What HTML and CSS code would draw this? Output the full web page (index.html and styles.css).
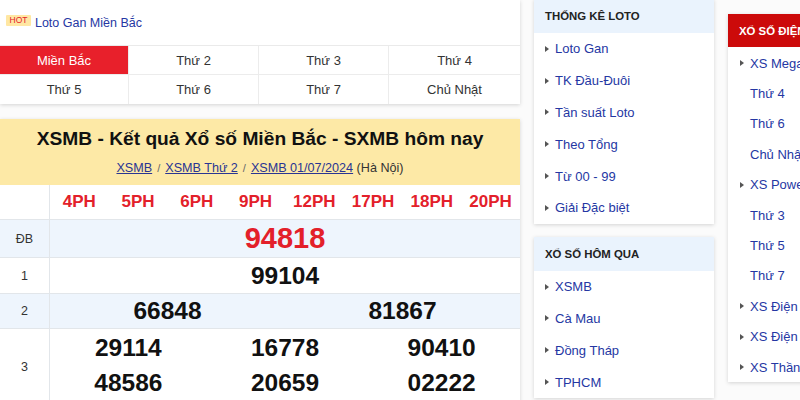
FILE: index.html
```html
<!DOCTYPE html>
<html lang="vi">
<head>
<meta charset="utf-8">
<title>XSMB - Kết quả Xổ số Miền Bắc</title>
<link rel="stylesheet" href="styles.css">
</head>
<body>
<div class="page">
  <div class="col-main">
    <section class="card card-top">
      <div class="hot-row"><span class="hot">HOT</span><a href="#" class="hot-link">Loto Gan Miền Bắc</a></div>
      <div class="tabs">
        <a href="#" class="tab active">Miền Bắc</a>
        <a href="#" class="tab">Thứ 2</a>
        <a href="#" class="tab">Thứ 3</a>
        <a href="#" class="tab">Thứ 4</a>
        <a href="#" class="tab">Thứ 5</a>
        <a href="#" class="tab">Thứ 6</a>
        <a href="#" class="tab">Thứ 7</a>
        <a href="#" class="tab">Chủ Nhật</a>
      </div>
    </section>

    <section class="card result">
      <div class="result-head">
        <h1 class="result-title">XSMB - Kết quả Xổ số Miền Bắc - SXMB hôm nay</h1>
        <div class="crumbs"><a href="#">XSMB</a><span class="sep">/</span><a href="#">XSMB Thứ 2</a><span class="sep">/</span><a href="#">XSMB 01/07/2024</a> (Hà Nội)</div>
      </div>
      <div class="kq">
        <div class="kq-row kq-codes">
          <div class="kq-label"></div>
          <div class="kq-vals cols-8">
            <span>4PH</span><span>5PH</span><span>6PH</span><span>9PH</span><span>12PH</span><span>17PH</span><span>18PH</span><span>20PH</span>
          </div>
        </div>
        <div class="kq-row alt row-db">
          <div class="kq-label">ĐB</div>
          <div class="kq-vals cols-1"><span class="db">94818</span></div>
        </div>
        <div class="kq-row row-1">
          <div class="kq-label">1</div>
          <div class="kq-vals cols-1"><span>99104</span></div>
        </div>
        <div class="kq-row alt row-2">
          <div class="kq-label">2</div>
          <div class="kq-vals cols-2"><span>66848</span><span>81867</span></div>
        </div>
        <div class="kq-row row-3">
          <div class="kq-label">3</div>
          <div class="kq-vals cols-3"><span>29114</span><span>16778</span><span>90410</span><span>48586</span><span>20659</span><span>02222</span></div>
        </div>
      </div>
    </section>
  </div>

  <div class="col-side">
    <section class="card side">
      <h3 class="side-head">THỐNG KÊ LOTO</h3>
      <ul class="side-list">
        <li><a href="#">Loto Gan</a></li>
        <li><a href="#">TK Đầu-Đuôi</a></li>
        <li><a href="#">Tần suất Loto</a></li>
        <li><a href="#">Theo Tổng</a></li>
        <li><a href="#">Từ 00 - 99</a></li>
        <li><a href="#">Giải Đặc biệt</a></li>
      </ul>
    </section>
    <section class="card side">
      <h3 class="side-head">XỔ SỐ HÔM QUA</h3>
      <ul class="side-list">
        <li><a href="#">XSMB</a></li>
        <li><a href="#">Cà Mau</a></li>
        <li><a href="#">Đồng Tháp</a></li>
        <li><a href="#">TPHCM</a></li>
      </ul>
    </section>
  </div>

  <div class="col-right">
    <section class="card right">
      <h3 class="right-head">XỔ SỐ ĐIỆN TOÁN</h3>
      <ul class="right-list">
        <li class="arrow"><a href="#">XS Mega 6/45</a></li>
        <li><a href="#">Thứ 4</a></li>
        <li><a href="#">Thứ 6</a></li>
        <li><a href="#">Chủ Nhật</a></li>
        <li class="arrow"><a href="#">XS Power 6/55</a></li>
        <li><a href="#">Thứ 3</a></li>
        <li><a href="#">Thứ 5</a></li>
        <li><a href="#">Thứ 7</a></li>
        <li class="arrow"><a href="#">XS Điện toán 123</a></li>
        <li class="arrow"><a href="#">XS Điện toán 6x36</a></li>
        <li class="arrow"><a href="#">XS Thần tài 4</a></li>
      </ul>
    </section>
  </div>
</div>
</body>
</html>
```

FILE: styles.css
```css
* { box-sizing: border-box; }

html, body {
  margin: 0;
  padding: 0;
  background: #fbfbfb;
  overflow: hidden;
  font-family: "Liberation Sans", Arial, sans-serif;
  color: #222;
}

a { text-decoration: none; }

.page {
  display: flex;
  align-items: flex-start;
  gap: 14px;
  width: 1000px;
  height: 400px;
}

.card {
  background: #fff;
  box-shadow: 0 1px 4px rgba(0, 0, 0, 0.16);
}

/* ---------- main column ---------- */
.col-main {
  width: 520px;
  display: flex;
  flex-direction: column;
  gap: 15px;
}

.hot-row {
  height: 45px;
  display: flex;
  align-items: center;
  padding-left: 6px;
  gap: 4px;
}

.hot {
  display: inline-block;
  background: #ffe7a3;
  color: #e3222b;
  font-size: 8.5px;
  line-height: 11px;
  padding: 0 3.5px;
  border-radius: 1px;
  margin-top: -5px;
}

.hot-link {
  color: #2537a3;
  font-size: 12.5px;
}

.tabs {
  display: grid;
  grid-template-columns: 129px 130px 130px 131px;
  border-top: 1px solid #eaeaea;
}

.tab {
  height: 29px;
  display: flex;
  align-items: center;
  justify-content: center;
  font-size: 13px;
  color: #333;
  border-right: 1px solid #ececec;
  border-bottom: 1px solid #ececec;
}

.tab:nth-child(4n) { border-right: 0; }
.tab:nth-child(n+5) { border-bottom: 0; }

.tab.active {
  background: #e8202b;
  color: #fff;
}

/* ---------- result card ---------- */
.result-head {
  background: #fde9a6;
  height: 66px;
  padding-top: 8px;
  text-align: center;
}

.result-title {
  margin: 0;
  font-size: 19.2px;
  line-height: 24px;
  font-weight: bold;
  color: #111;
}

.crumbs {
  margin-top: 10px;
  font-size: 12.6px;
  color: #333;
}

.crumbs a {
  color: #2a3593;
  text-decoration: underline;
}

.crumbs .sep {
  color: #666;
  margin: 0 5px;
  font-size: 11px;
}

.kq-row {
  display: flex;
  border-top: 1px solid #e2e6ea;
}

.kq-row.alt { background: #eef5fd; }

.kq-label {
  width: 50px;
  flex: none;
  border-right: 1px solid #e2e6ea;
  display: flex;
  align-items: center;
  justify-content: center;
  font-size: 12.5px;
  color: #333;
}

.kq-vals {
  flex: 1;
  display: grid;
  align-items: center;
  justify-items: center;
  font-weight: bold;
  color: #111;
}

.cols-8 { grid-template-columns: repeat(8, 1fr); }
.cols-1 { grid-template-columns: 1fr; }
.cols-2 { grid-template-columns: repeat(2, 1fr); }
.cols-3 { grid-template-columns: repeat(3, 1fr); }

.kq-codes { height: 34px; border-top: 0; }
.kq-codes .kq-vals {
  color: #e3202a;
  font-size: 17px;
}

.row-db { height: 38px; }
.row-db .db {
  color: #e3202a;
  font-size: 29px;
}

.row-1 { height: 36px; }
.row-2 { height: 35px; }
.row-1 .kq-vals,
.row-2 .kq-vals,
.row-3 .kq-vals { font-size: 24.5px; }

.row-3 .kq-vals {
  padding: 1px 0 4px;
  grid-auto-rows: 35px;
}

/* ---------- side column ---------- */
.col-side {
  width: 180px;
  display: flex;
  flex-direction: column;
  gap: 13px;
  margin-top: -1px;
}

.side-head {
  margin: 0;
  height: 34px;
  background: #eaf3fd;
  display: flex;
  align-items: center;
  padding-left: 11px;
  font-size: 11.4px;
  font-weight: bold;
  color: #222;
}

.side-list,
.right-list {
  list-style: none;
  margin: 0;
  padding: 0;
}

.side-list li {
  height: 31.8px;
  display: flex;
  align-items: center;
  padding-left: 11px;
}

.side-list li::before,
.right-list li.arrow::before {
  content: "";
  width: 0;
  height: 0;
  border-left: 4px solid #555;
  border-top: 3px solid transparent;
  border-bottom: 3px solid transparent;
  margin-right: 6px;
}

.side-list a,
.right-list a {
  color: #2537a3;
  font-size: 13px;
}

/* ---------- right column ---------- */
.col-right {
  width: 200px;
  padding-top: 14px;
}

.right-head {
  margin: 0;
  height: 33px;
  background: #cc0a0a;
  color: #fff;
  display: flex;
  align-items: center;
  padding-left: 11px;
  font-size: 11.4px;
  font-weight: bold;
  white-space: nowrap;
}

.right-list { padding-top: 1px; }

.right-list li {
  height: 30.4px;
  display: flex;
  align-items: center;
  padding-left: 22px;
  white-space: nowrap;
}

.right-list li.arrow { padding-left: 12px; }
```
